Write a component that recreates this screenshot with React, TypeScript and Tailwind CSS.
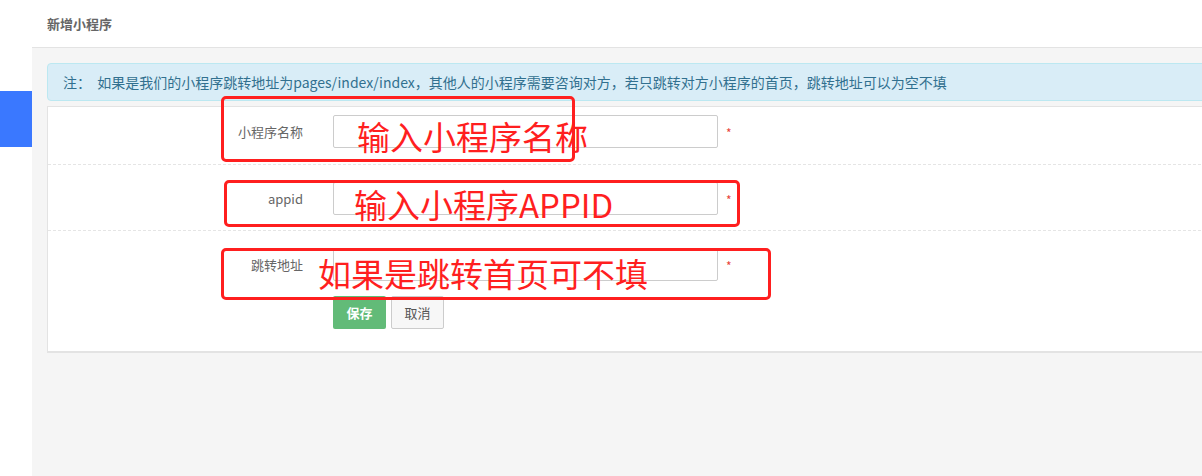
import React from "react";

const font = { fontFamily: '"Noto Sans CJK SC", "Noto Sans", sans-serif' };

function Row({ label, className }: { label: string; className: string }) {
  return (
    <div className={`flex items-center ${className}`}>
      <div className="w-[255px] text-right text-[13px] text-[#666] pr-0 leading-[18px]">{label}</div>
      <div className="ml-[30px] w-[385px] h-[33px] border border-[#ccc] rounded-[2px] bg-white" />
      <span className="ml-[8px] text-[12px] text-[#e8443a] leading-none mt-[2px]">*</span>
    </div>
  );
}

export default function App() {
  return (
    <div className="relative w-[1202px] h-[476px] overflow-hidden bg-white flex" style={font}>
      {/* sidebar */}
      <div className="w-[32px] shrink-0 bg-white flex flex-col">
        <div className="h-[91px]" />
        <div className="h-[56px] bg-[#3a78ff]" />
      </div>
      {/* main */}
      <div className="flex-1 flex flex-col min-w-0">
        <div className="h-[47px] bg-white flex items-center pl-[15px]">
          <span className="text-[13px] font-bold text-[#666]">新增小程序</span>
        </div>
        <div className="flex-1 bg-[#f5f5f5] border-t border-[#e3e3e3] pl-[15px] pt-[15px]">
          <div className="w-[1200px] h-[38px] bg-[#d9edf7] border border-[#bce8f1] rounded-[4px] flex items-center pl-[15px] text-[14px] text-[#31708f] whitespace-nowrap">
            注：&nbsp;&nbsp;如果是我们的小程序跳转地址为pages/index/index，其他人的小程序需要咨询对方，若只跳转对方小程序的首页，跳转地址可以为空不填
          </div>
          <div className="mt-[5px] w-[1200px] bg-white border border-[#e3e3e3] border-b-2 pt-0">
            <Row label="小程序名称" className="pt-[8px] pb-[16px] border-b border-dashed border-[#e5e5e5]" />
            <Row label="appid" className="pt-[17px] pb-[15px] border-b border-dashed border-[#e5e5e5]" />
            <Row label="跳转地址" className="pt-[17px]" />
            <div className="flex gap-[5px] pl-[285px] mt-[15px] pb-[22px]">
              <button className="w-[53px] h-[33px] bg-[#62bb78] text-white text-[13px] font-bold rounded-[2px]">保存</button>
              <button className="w-[53px] h-[33px] bg-[#f7f7f7] border border-[#ccc] text-[#555] text-[13px] rounded-[2px]">取消</button>
            </div>
          </div>
        </div>
      </div>

      {/* annotations */}
      <div className="absolute left-[221px] top-[96px] w-[354px] h-[66px] border-[3px] border-[#ff1f1f] rounded-[5px]" />
      <div className="absolute left-[224px] top-[180px] w-[516px] h-[47px] border-[3px] border-[#ff1f1f] rounded-[5px]" />
      <div className="absolute left-[221px] top-[248px] w-[550px] h-[52px] border-[3px] border-[#ff1f1f] rounded-[5px]" />
      <div className="absolute left-[357px] top-[116px] text-[33px] leading-[40px] text-[#ff1f1f] whitespace-nowrap">输入小程序名称</div>
      <div className="absolute left-[354px] top-[184px] text-[33px] leading-[40px] text-[#ff1f1f] whitespace-nowrap">输入小程序APPID</div>
      <div className="absolute left-[318px] top-[253px] text-[33px] leading-[40px] text-[#ff1f1f] whitespace-nowrap">如果是跳转首页可不填</div>
    </div>
  );
}
